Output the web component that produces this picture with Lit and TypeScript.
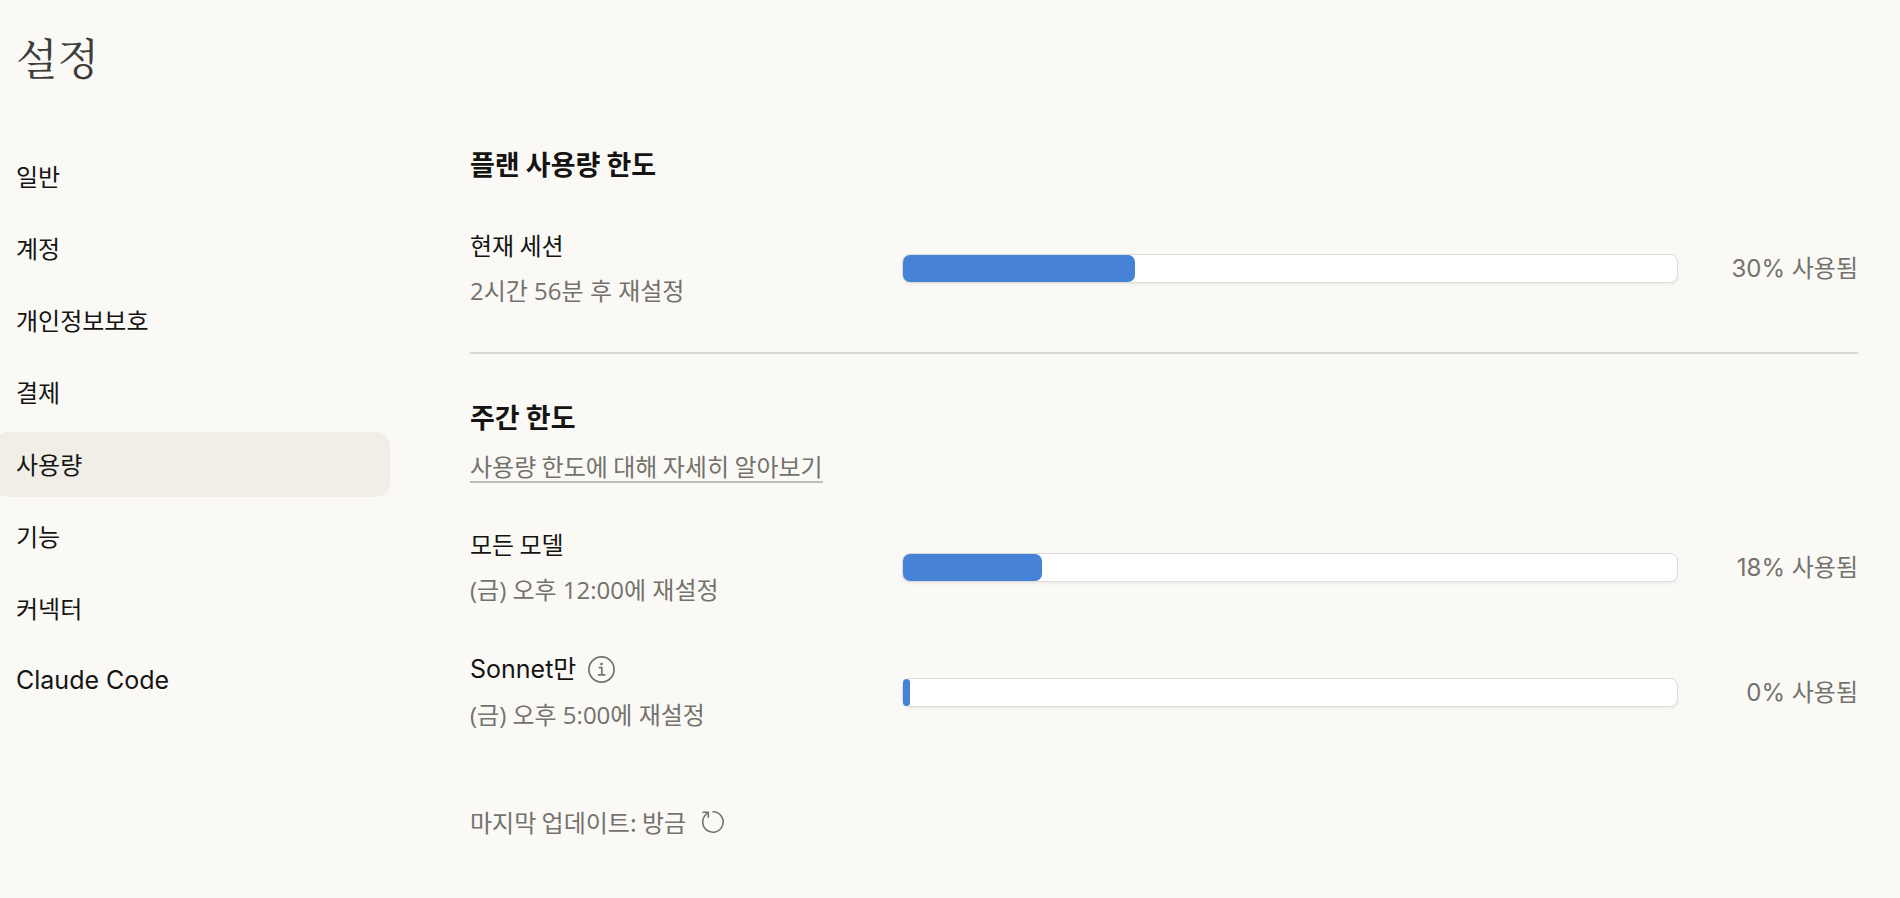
import { LitElement, html, css, nothing } from "lit";
import { customElement, property, state } from "lit/decorators.js";

@customElement("usage-row")
class UsageRow extends LitElement {
  @property() label = "";
  @property() reset = "";
  @property({ type: Number }) percent = 0;
  @property({ type: Boolean }) info = false;

  static styles = css`
    :host { display: block; }
    .row {
      display: grid;
      grid-template-columns: 432px minmax(0, 1fr) 180px;
      align-items: center;
    }
    .text { display: flex; flex-direction: column; gap: 10px; }
    .label { display: flex; align-items: center; gap: 12px; margin: 0; color: #141413; }
    .latin { font-family: Inter, "Noto Sans CJK KR", sans-serif; font-size: 25px; }
    .reset {
      margin: 0;
      color: #73726c;
      font-family: "Open Sans", "Noto Sans CJK KR", sans-serif;
    }
    .percent {
      margin: 0;
      padding-top: 2px;
      color: #73726c;
      font-family: Inter, "Noto Sans CJK KR", sans-serif;
      text-align: right;
      white-space: nowrap;
    }
    .track {
      box-sizing: border-box;
      height: 29px;
      border: 1px solid #dddcdb;
      border-radius: 8px;
      background: #fff;
      box-shadow: 0 2px 3px rgba(0, 0, 0, 0.05);
    }
    .fill {
      height: 27px;
      min-width: 7px;
      border-radius: 7px;
      background: #4682d5;
    }
    .info {
      display: flex;
      padding: 0;
      border: 0;
      background: none;
      color: #73726c;
      cursor: pointer;
    }
  `;

  render() {
    return html`
      <div class="row">
        <div class="text">
          <p class="label">
            <span id="label" class=${this.info ? "latin" : ""}>${this.label}</span>
            ${this.info
              ? html`<button class="info" type="button" aria-label="정보">
                  <svg width="27" height="27" viewBox="0 0 27 27" fill="none" stroke="currentColor">
                    <circle cx="13.5" cy="13.5" r="12.6" stroke-width="1.7" />
                    <path d="M10.7 11.6h3.1v7M10 18.8h7.4" stroke-width="1.7" />
                    <circle cx="13.5" cy="8.1" r="1.3" fill="currentColor" stroke="none" />
                  </svg>
                </button>`
              : nothing}
          </p>
          <p class="reset">${this.reset}</p>
        </div>
        <div
          class="track"
          role="progressbar"
          aria-labelledby="label"
          aria-valuemin="0"
          aria-valuemax="100"
          aria-valuenow=${this.percent}
        >
          <div class="fill" style="width:${this.percent}%"></div>
        </div>
        <p class="percent">${this.percent}% 사용됨</p>
      </div>
    `;
  }
}

@customElement("app-root")
class AppRoot extends LitElement {
  @state() private current = "사용량";

  private sections = [
    { name: "일반" },
    { name: "계정" },
    { name: "개인정보보호" },
    { name: "결제" },
    { name: "사용량" },
    { name: "기능" },
    { name: "커넥터" },
    { name: "Claude Code", latin: true },
  ];

  static styles = css`
    :host {
      display: block;
      box-sizing: border-box;
      min-height: 100vh;
      overflow-x: hidden;
      background: #faf9f5;
      color: #141413;
      font-family: "Noto Sans CJK KR", sans-serif;
      font-size: 24px;
      line-height: 36px;
    }
    .title {
      margin: 0;
      padding: 27px 16px 0;
      color: #3d3d3a;
      font-family: "Noto Serif CJK KR", "Noto Sans CJK KR", serif;
      font-size: 43px;
      font-weight: 400;
      line-height: 60px;
    }
    .layout {
      display: grid;
      grid-template-columns: 390px minmax(0, 1fr);
      column-gap: 80px;
      padding: 57px 42px 40px 0;
    }
    .nav {
      display: flex;
      flex-direction: column;
      gap: 7px;
      margin-left: -6px;
    }
    .item {
      padding: 14px 22px 15px;
      border-radius: 14px;
      color: inherit;
      text-decoration: none;
    }
    .latin { font-family: Inter, sans-serif; font-size: 25px; }
    .active { background: #f0eee6; }
    .content { padding-top: 2px; }
    .heading { margin: 0; font-size: 27px; font-weight: 600; line-height: 36px; }
    .rows { display: flex; flex-direction: column; gap: 43px; }
    .session { margin-top: 45px; }
    .weekly { margin-top: 43px; }
    .rule { height: 2px; margin: 43px 0 45px; border: 0; background: #d9d8d4; }
    .learn {
      display: block;
      width: fit-content;
      margin-top: 16px;
      border-bottom: 2px solid #bfbeb9;
      color: #73726c;
      line-height: 30px;
      text-decoration: none;
    }
    .footer { display: flex; align-items: center; gap: 14px; margin-top: 71px; color: #73726c; }
    .refresh {
      display: flex;
      padding: 0;
      border: 0;
      background: none;
      color: inherit;
      cursor: pointer;
    }
  `;

  private select(e: Event, name: string) {
    e.preventDefault();
    this.current = name;
  }

  render() {
    return html`
      <h1 class="title">설정</h1>
      <div class="layout">
        <nav class="nav" aria-label="설정">
          ${this.sections.map(
            ({ name, latin }) => html`<a
              class="item ${name === this.current ? "active" : ""} ${latin ? "latin" : ""}"
              href="#"
              aria-current=${name === this.current ? "page" : nothing}
              @click=${(e: Event) => this.select(e, name)}
              >${name}</a
            >`
          )}
        </nav>
        <main class="content">
          <h2 class="heading">플랜 사용량 한도</h2>
          <usage-row class="session" label="현재 세션" reset="2시간 56분 후 재설정" percent="30"></usage-row>
          <hr class="rule" />
          <h2 class="heading">주간 한도</h2>
          <a class="learn" href="#">사용량 한도에 대해 자세히 알아보기</a>
          <div class="rows weekly">
            <usage-row label="모든 모델" reset="(금) 오후 12:00에 재설정" percent="18"></usage-row>
            <usage-row label="Sonnet만" reset="(금) 오후 5:00에 재설정" percent="0" info></usage-row>
          </div>
          <div class="footer">
            <span>마지막 업데이트: 방금</span>
            <button class="refresh" type="button" aria-label="새로고침">
              <svg width="26" height="26" viewBox="0 0 26 26" fill="none" stroke="currentColor" stroke-width="1.6" stroke-linecap="round" stroke-linejoin="round">
                <path d="M13 2.8A10.2 10.2 0 1 1 8.3 3.9" />
                <path d="M3 3.3h5.3v5" />
              </svg>
            </button>
          </div>
        </main>
      </div>
    `;
  }
}
